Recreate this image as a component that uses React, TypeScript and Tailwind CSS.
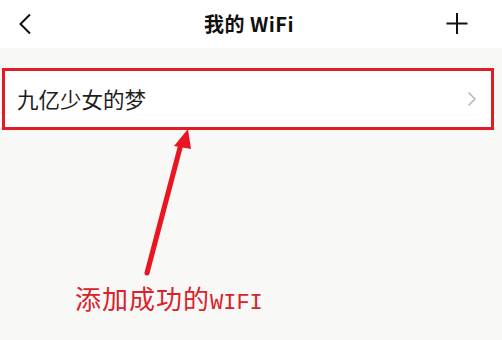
import React from "react";

export default function App() {
  const cjk = '"Noto Sans CJK SC", "Noto Sans", sans-serif';
  return (
    <div className="relative w-[502px] h-[340px] overflow-hidden bg-[#f8f8f7]" style={{ fontFamily: cjk }}>
      <div className="h-[48px] bg-white flex items-center px-[17px]">
        <div className="flex-1 flex">
          <svg width="14" height="22" viewBox="0 0 14 22" className="ml-[1px]">
            <path d="M12 1.5 L2.5 11 L12 20.5" fill="none" stroke="#111" strokeWidth="2" />
          </svg>
        </div>
        <div className="text-[20px] font-semibold text-[#111] leading-none tracking-[0.5px] mr-[4px]">我的 WiFi</div>
        <div className="flex-1 flex justify-end">
          <svg width="22" height="22" viewBox="0 0 22 22" className="mr-[17px]">
            <path d="M11 0 V21 M0.5 10.5 H21.5" fill="none" stroke="#111" strokeWidth="2" />
          </svg>
        </div>
      </div>
      <div className="pt-[20px] px-[2px]">
        <div className="h-[62px] w-[492px] bg-white border-[3px] border-[#e31b23] flex items-center justify-between pl-[12px] pr-[14px]">
          <span className="text-[21.5px] text-[#1e1e1e] leading-none">九亿少女的梦</span>
          <svg width="10" height="16" viewBox="0 0 10 16">
            <path d="M1.5 1.5 L8 8 L1.5 14.5" fill="none" stroke="#b9b9b9" strokeWidth="1.6" />
          </svg>
        </div>
        <div className="mt-[155px] ml-[73px] text-[#d9222a] text-[26px] leading-none whitespace-nowrap tracking-[1px]">
          添加成功的<span className="text-[22px] tracking-[0px]" style={{ fontFamily: '"Liberation Mono", monospace' }}>WIFI</span>
        </div>
      </div>
      <svg className="absolute left-0 top-0 pointer-events-none" width="502" height="340" viewBox="0 0 502 340">
        <line x1="147" y1="273" x2="181" y2="144" stroke="#ea1520" strokeWidth="5" strokeLinecap="round" />
        <polygon points="188,129 174,146 191,149" fill="#ea1520" />
      </svg>
    </div>
  );
}
